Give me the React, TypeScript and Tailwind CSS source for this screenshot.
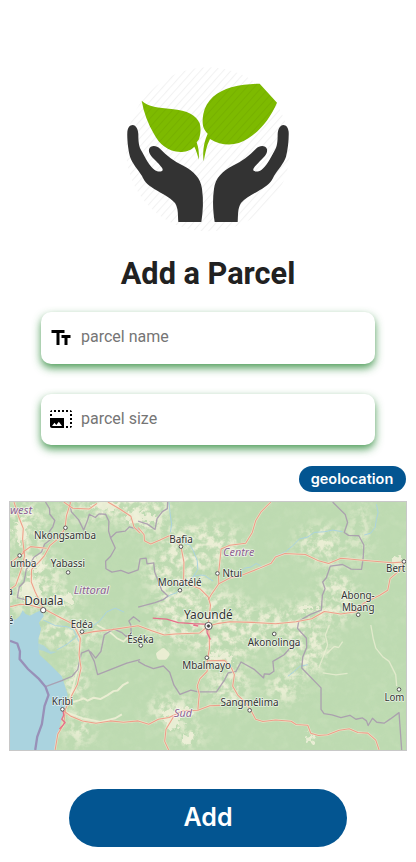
import React from "react";
import { MdTextFields, MdPhotoSizeSelectLarge } from "react-icons/md";

function Logo() {
  return (
    <svg viewBox="0 0 540 525" className="h-[175px] w-[180px] shrink-0">
      <defs>
        <pattern id="hatch" width="17" height="17" patternUnits="userSpaceOnUse" patternTransform="rotate(42)">
          <rect width="3" height="17" fill="#000" opacity="0.05" />
        </pattern>
      </defs>
      <g fill="#7dba00">
        <path d="M71 122 C90 140 122 143 160 147 C210 151 235 166 245 190 C250 209 247 225 243 238 L236 247 C242 264 244 282 242 299 C239 285 235 272 229 260 C216 273 201 276 187 276 C150 276 123 251 108 222 C90 191 77 157 71 122Z" />
        <path d="M425 71 L477 128 C457 174 428 211 391 235 C354 260 313 259 276 237 C265 258 262 280 257 304 C253 277 257 246 269 221 C252 206 252 184 256 162 C264 120 298 94 340 82 C370 74 398 72 425 71Z" />
      </g>
      <circle cx="270" cy="268" r="246" fill="url(#hatch)" />
      <g fill="#333">
        <path id="left-hand" d="M44 195 C54 196 60 207 61 222 C61 244 62 261 72 275 C84 298 96 319 110 330 C119 336 131 336 134 331 C136 325 125 315 114 303 C99 289 91 279 93 268 C97 255 115 255 126 266 C146 287 168 304 196 317 C226 332 248 354 252 386 C257 420 255 455 250 486 H181 C179 465 182 447 171 429 C155 410 122 397 100 381 C84 371 79 362 72 348 C59 327 43 311 36 290 C30 266 27 236 28 215 C30 202 35 196 44 195Z" />
        <use href="#left-hand" transform="translate(540 0) scale(-1 1)" />
      </g>
    </svg>
  );
}

type Label = { x: number; y: number; w: number; t: string; s?: number; region?: boolean };

const labels: Label[] = [
  { x: 28, y: 55, w: 67, t: "west", region: true },
  { x: 100, y: 129, w: 187, t: "Nkongsamba" },
  { x: 29, y: 216, w: 78, t: "umba" },
  { x: 151, y: 216, w: 103, t: "Yabassi" },
  { x: 220, y: 295, w: 107, t: "Littoral", region: true },
  { x: 71, y: 329, w: 118, t: "Douala", s: 38 },
  { x: 211, y: 398, w: 67, t: "Edéa" },
  { x: 508, y: 141, w: 71, t: "Bafia" },
  { x: 670, y: 180, w: 94, t: "Centre", region: true },
  { x: 668, y: 244, w: 59, t: "Ntui" },
  { x: 473, y: 273, w: 132, t: "Monatélé" },
  { x: 552, y: 371, w: 147, t: "Yaoundé", s: 38 },
  { x: 1161, y: 231, w: 58, t: "Bert" },
  { x: 1026, y: 311, w: 101, t: "Abong-" },
  { x: 1028, y: 347, w: 98, t: "Mbang" },
  { x: 381, y: 443, w: 80, t: "Éséka" },
  { x: 744, y: 453, w: 159, t: "Akonolinga" },
  { x: 547, y: 524, w: 147, t: "Mbalmayo" },
  { x: 154, y: 633, w: 64, t: "Kribi" },
  { x: 662, y: 635, w: 175, t: "Sangmélima" },
  { x: 522, y: 667, w: 54, t: "Sud", region: true },
  { x: 1156, y: 621, w: 60, t: "Lom" },
];

const towns = [
  [195, 96], [57, 180], [203, 231], [245, 410], [543, 153], [653, 234], [540, 285],
  [422, 452], [824, 417], [621, 489], [186, 645], [750, 648], [1077, 359], [1215, 198], [1200, 585],
];

const roads = [
  "M40 18 L55 65 68 98 66 130 72 180 61 225 45 270 28 282 M211 18 L198 60 194 96 178 125 148 150 132 180 115 200 93 222 92 260 104 290 128 340 182 369 218 387 240 430 236 480 242 520 231 570 213 605 195 645 190 690 172 720 164 768",
  "M66 170 L90 153 138 158 M28 203 L57 180 72 170 M190 18 L217 37 267 39 290 22 M323 18 L360 40 392 61 402 95 420 112 M28 335 L60 327 90 330 125 340",
  "M414 95 L432 117 433 135 452 145 480 133 508 120 532 134 544 158 552 200 551 252 570 268 600 280 625 305 632 330 626 383",
  "M814 18 L785 47 768 75 758 110 738 143 690 149 664 160 660 200 656 235 657 265 633 300 626 314",
  "M657 265 L690 248 730 238 780 218 815 203 828 184 856 174 918 177 958 196 988 204 1025 188 1090 194 1180 202 1221 199",
  "M240 418 L280 410 335 404 414 392 455 407 493 420 525 417 600 414 625 393 657 385 690 380 758 382 828 386 890 380 937 371 975 349 1025 357 1070 350 1092 325 1142 300 1166 285 1173 250 1202 225 1215 198",
  "M626 390 L628 424 629 460 622 500 622 530 600 553 592 575 598 600 594 646 M621 498 L675 497 695 520 704 540 699 575 714 602 738 625 755 650 768 675 790 682 828 677 875 681 890 691 925 693 934 717 957 724 985 722 1020 708 1050 704 1076 715 1106 717 1130 738 1140 768",
  "M190 650 L210 665 246 680 287 687 330 680 370 684 414 680 446 690 475 675 507 670 548 650 594 648 630 634 662 633 M522 665 L498 705 494 742 506 768",
];

const borders = [
  "M135 18 L147 38 148 55 163 74 157 93 147 107 152 130 132 146 123 169 100 185 88 207 77 222 74 240 70 260 56 275 50 307 75 314",
  "M207 18 L213 48 235 72 250 103 261 75 267 55 285 65 296 54 316 55 326 76 325 106 331 126 348 110 375 106 388 93 420 103",
  "M331 126 L345 157 331 182 316 197 317 220 335 230 362 225 385 234 414 223 420 190 438 188 441 205 461 202 464 230 485 285 504 302 490 313 465 322 414 336 M414 76 L442 85 465 101 471 68 487 47 502 38 503 18",
  "M1000 18 L1038 56 1045 80 1035 110 1048 119 1079 120 1094 148 1092 188 1087 222 1056 221 1030 207 993 212 981 247 970 260 977 280 969 300 966 345 935 357 898 378 894 400 921 430 922 457 910 487 907 520 965 580 965 645 974 658 998 662 1025 670 1052 663 1070 675 1090 671 1102 680 1107 694 1120 672 1133 684 1155 687 1174 674 1200 655 1208 768",
  "M897 450 L885 444 854 480 820 500 823 530 810 539 794 538 792 550 765 525 724 502 709 530 685 535 675 555 650 592 594 592 573 587 540 600 522 572 509 533 490 514 460 522 435 512 414 500 M420 495 L380 505 292 540 282 500 265 466 243 475 232 525 215 545 184 558 135 576 M270 470 L286 490 302 470 312 420 340 402 365 413 378 425 393 415 392 390 386 378 400 365 420 380",
];

const patches = [
  [75, 90, 65, 80], [110, 240, 78, 80], [120, 315, 125, 45], [210, 415, 110, 45],
  [330, 45, 170, 35], [445, 50, 65, 70], [610, 145, 125, 70], [525, 230, 95, 80],
  [600, 350, 155, 75], [675, 415, 160, 75], [545, 410, 100, 45], [790, 390, 110, 60],
  [965, 145, 75, 60], [1085, 105, 22, 100], [1013, 305, 60, 90], [920, 350, 75, 30],
  [920, 460, 70, 90], [851, 580, 55, 50], [685, 570, 65, 80], [515, 645, 75, 45],
  [570, 725, 50, 30], [235, 705, 45, 50], [222, 565, 40, 80], [410, 25, 110, 50],
];

// Clearings that are bright enough to read as open ground.
const clearings = [
  [100, 205, 28, 22], [92, 290, 30, 40], [190, 312, 30, 14], [320, 30, 45, 14], [400, 60, 25, 20],
  [440, 68, 34, 16], [535, 655, 42, 16], [520, 680, 22, 26], [925, 338, 24, 10], [1200, 196, 22, 14],
  [565, 735, 16, 16], [60, 100, 14, 40], [933, 730, 10, 12], [660, 490, 40, 12],
];

function Map() {
  return (
    <svg viewBox="28 18 1193 750" preserveAspectRatio="none" className="block h-full w-full" fill="none">
      <defs>
        <filter id="terrain" x="0" y="0" width="1" height="1" colorInterpolationFilters="sRGB">
          <feGaussianBlur in="SourceAlpha" stdDeviation="22" result="area" />
          <feTurbulence type="fractalNoise" baseFrequency="0.045" numOctaves="4" seed="8" />
          <feColorMatrix values="0 0 0 0 .94 0 0 0 0 .945 0 0 0 0 .85 3.6 0 0 0 -1.45" />
          <feComposite in2="area" operator="in" />
        </filter>
        <filter id="forest" x="0" y="0" width="1" height="1" colorInterpolationFilters="sRGB">
          <feTurbulence type="fractalNoise" baseFrequency="0.03" numOctaves="3" seed="21" />
          <feColorMatrix values="0 0 0 0 .84 0 0 0 0 .91 0 0 0 0 .78 4 0 0 0 -2.1" />
        </filter>
        <filter id="ragged" x="-5%" y="-5%" width="110%" height="110%">
          <feTurbulence type="fractalNoise" baseFrequency="0.06" numOctaves="3" seed="12" result="n" />
          <feDisplacementMap in="SourceGraphic" in2="n" scale="45" xChannelSelector="R" yChannelSelector="G" />
          <feGaussianBlur stdDeviation="1.5" />
        </filter>
      </defs>
      <rect x="28" y="18" width="1193" height="750" fill="#bddab1" />
      <rect x="28" y="18" width="1193" height="750" filter="url(#forest)" opacity="0.2" />
      <g filter="url(#terrain)" opacity="0.9">
        <rect x="28" y="18" width="1193" height="750" fill="#000" fillOpacity="0.03" />
        {patches.map(([x, y, rx, ry], i) => (
          <ellipse key={i} cx={x} cy={y} rx={rx} ry={ry} fill="#000" />
        ))}
      </g>
      <g filter="url(#ragged)" fill="#f0f1da" opacity="0.85">
        {clearings.map(([x, y, rx, ry], i) => (
          <ellipse key={i} cx={x} cy={y} rx={rx} ry={ry} />
        ))}
      </g>
      <g stroke="#eff0d6" strokeWidth="6" strokeLinejoin="round" opacity="0.9">
        <path d="M218 623 L235 618 250 612 262 619 280 610 300 614 322 602 340 590 352 588 368 572 385 563 M200 655 L250 673 300 683 345 672 365 660 M235 510 L220 570 205 625" />
        <path d="M990 390 L978 420 985 450 970 490 958 520 M982 476 L1005 455 1018 458 1030 440 M1115 390 L1122 430 1130 460 1150 485 1170 500 1190 540 1193 575 M970 535 L1010 541 1045 536" strokeWidth="4" strokeOpacity="0.8" />
        <path d="M475 478 L490 467 502 478 495 488 478 488Z" fill="#eff0d6" strokeWidth="14" />
        <path d="M290 390 L330 412 350 430 370 440 390 420" strokeWidth="5" />
      </g>
      <g fill="#aad3df">
        <path d="M28 370 L45 374 58 362 66 345 75 357 88 362 106 352 122 345 130 363 115 383 122 402 114 430 113 458 117 480 151 512 184 545 202 600 196 635 184 670 175 710 164 768 H28Z" />
        <path d="M112 445 L130 452 150 470 170 471 150 478 128 468 113 465Z" opacity="0.8" />
      </g>
      <g stroke="#aad3df" strokeWidth="3" strokeLinejoin="round">
        <path d="M490 313 L510 300 530 292 548 275 566 255 580 243 600 239 615 240 628 250 640 257 M580 243 L594 222 592 195 580 165 570 148 552 142 M657 263 L685 252 710 240 735 218 753 215 770 204 790 215 812 204 828 182 856 170 880 150 900 130 925 124 945 110 975 108 1000 103 1030 108 M1095 118 L1115 112 1128 95 1132 70 1137 50 1132 25 M507 18 L510 50 515 85 511 110" />
        <path d="M128 375 L165 392 200 395 220 405 235 440 M240 415 L270 398 298 378 320 350 345 339 372 351 M865 545 L885 530 900 515 925 510 M170 465 L200 448 222 430 240 415" />
      </g>
      <g stroke="#a99bae" strokeWidth="4" strokeLinejoin="round" opacity="0.9">
        {borders.map((d) => <path key={d} d={d} />)}
      </g>
      <path d="M28 438 L50 446 58 470 57 493 82 523 115 553 135 577 144 602 132 635 124 690 110 728 104 768" stroke="#9890b8" strokeWidth="7" />
      <g strokeLinejoin="round">
        <g stroke="#f3e9d2" strokeWidth="7" strokeOpacity="0.7">{roads.map((d) => <path key={d} d={d} />)}</g>
        <g stroke="#ee9f8a" strokeWidth="3.2">{roads.map((d) => <path key={d} d={d} />)}</g>
        <path d="M458 369 L500 372 535 383 580 386 626 388 M621 395 L622 414 632 434 M580 390 L595 393 M188 650 L190 663 184 675 194 685 177 705" stroke="#e66e89" strokeWidth="4" />
      </g>
      <g fill="#fff" stroke="#555" strokeWidth="3">
        {towns.map(([x, y]) => <circle key={`${x}-${y}`} cx={x} cy={y} r="5.5" />)}
        <circle cx="128" cy="345" r="8" />
        <circle cx="626" cy="393" r="11" />
        <circle cx="626" cy="393" r="4" fill="#444" />
      </g>
      <g fontFamily='"Noto Sans", sans-serif' stroke="#fff" strokeOpacity="0.65" strokeWidth="5" strokeLinejoin="round" style={{ paintOrder: "stroke" }}>
        {labels.map((l) => (
          <text
            key={l.t}
            x={l.x}
            y={l.y}
            textLength={l.w}
            lengthAdjust="spacingAndGlyphs"
            fontSize={l.s ?? 33}
            fill={l.region ? "#8d6292" : "#333"}
            fontStyle={l.region ? "italic" : "normal"}
          >
            {l.t}
          </text>
        ))}
        <text x="20" y="298" fontSize="30" fill="#333">a</text>
        <text x="21" y="388" fontSize="30" fill="#333">é</text>
      </g>
    </svg>
  );
}

function Field({ icon, placeholder }: { icon: React.ReactNode; placeholder: string }) {
  return (
    <label className="flex h-[51.5px] w-[334px] items-center rounded-[10px] bg-white pl-2 text-black shadow-[0_4px_8px_#2e8b3bd9]">
      {icon}
      <input
        type="text"
        placeholder={placeholder}
        className="ml-2 min-w-0 flex-1 bg-transparent pr-3 pb-px text-base outline-none placeholder:text-[#757575]"
      />
    </label>
  );
}

export default function App() {
  return (
    <main className="flex h-[862px] w-[416px] flex-col items-center overflow-hidden bg-white pt-[60px] font-[Roboto,sans-serif]">
      <Logo />
      <h1 className="mt-[21px] text-[30.7px] leading-9 font-bold text-[#212121]">Add a Parcel</h1>
      <form className="mt-5 flex flex-col gap-[30px]">
        <Field icon={<MdTextFields className="size-6 shrink-0" />} placeholder="parcel name" />
        <Field icon={<MdPhotoSizeSelectLarge className="size-6 shrink-0" />} placeholder="parcel size" />
      </form>
      <button className="mt-[21px] mr-[10px] h-[26px] w-[107px] self-end rounded-full bg-[#035591] pr-px font-[Inter,sans-serif] text-[14.5px] leading-none font-semibold text-white">
        geolocation
      </button>
      <div className="mt-[9px] h-[250px] w-[398px] shrink-0 border border-[#c8c8c8]">
        <Map />
      </div>
      <button className="mt-[38px] h-[58px] w-[278px] shrink-0 rounded-full bg-[#035591] font-[Inter,sans-serif] text-[25px] font-semibold text-white">
        Add
      </button>
    </main>
  );
}
